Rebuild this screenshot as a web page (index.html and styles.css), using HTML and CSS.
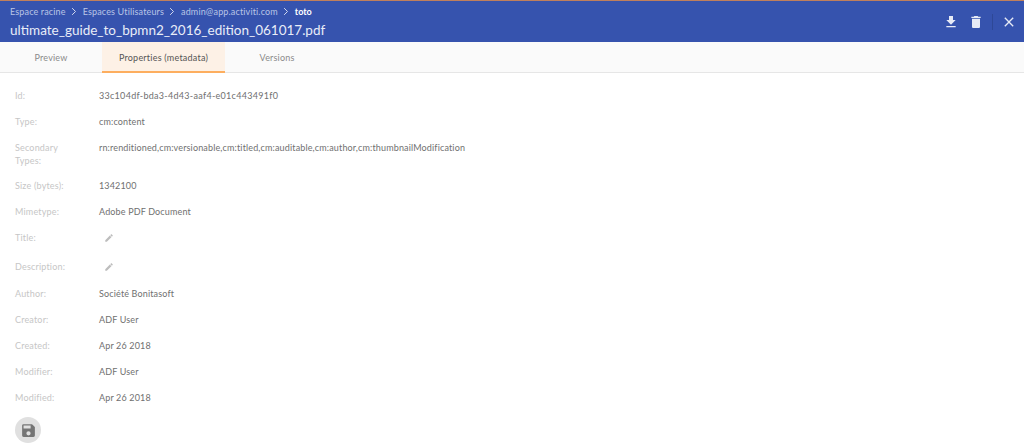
FILE: index.html
```html
<!DOCTYPE html>
<html lang="fr">
<head>
<meta charset="utf-8">
<title>Viewer</title>
<link rel="stylesheet" href="styles.css">
</head>
<body>
<header class="bar">
  <div class="bar-text">
    <nav class="crumbs">
      <span>Espace racine</span>
      <svg class="chev" viewBox="0 0 8 12"><path d="M1.5 1.5 6 6l-4.5 4.5" /></svg>
      <span>Espaces Utilisateurs</span>
      <svg class="chev" viewBox="0 0 8 12"><path d="M1.5 1.5 6 6l-4.5 4.5" /></svg>
      <span>admin@app.activiti.com</span>
      <svg class="chev" viewBox="0 0 8 12"><path d="M1.5 1.5 6 6l-4.5 4.5" /></svg>
      <span class="current">toto</span>
    </nav>
    <h1 class="file">ultimate_guide_to_bpmn2_2016_edition_061017.pdf</h1>
  </div>
  <div class="actions">
    <svg class="icon" viewBox="0 0 24 24"><path d="M19 9h-4V3H9v6H5l7 7 7-7zM5 18v2h14v-2H5z"/></svg>
    <svg class="icon trash" viewBox="0 0 24 24"><path d="M6 19c0 1.100.9 2 2 2h8c1.100 0 2-.9 2-2V7H6v12zM19 4h-3.500l-1-1h-5l-1 1H5v2h14V4z"/></svg>
    <span class="divider"></span>
    <svg class="icon close" viewBox="0 0 24 24"><path d="M19 6.410 17.590 5 12 10.590 6.410 5 5 6.410 10.590 12 5 17.590 6.410 19 12 13.410 17.590 19 19 17.590 13.410 12z"/></svg>
  </div>
</header>
<div class="tabs">
  <div class="tab">Preview</div>
  <div class="tab active">Properties (metadata)</div>
  <div class="tab">Versions</div>
</div>
<main class="props">
  <div class="row"><div class="key">Id:</div><div class="val wide">33c104df-bda3-4d43-aaf4-e01c443491f0</div></div>
  <div class="row"><div class="key">Type:</div><div class="val">cm:content</div></div>
  <div class="row"><div class="key">Secondary Types:</div><div class="val">rn:renditioned,cm:versionable,cm:titled,cm:auditable,cm:author,cm:thumbnailModification</div></div>
  <div class="row"><div class="key">Size (bytes):</div><div class="val">1342100</div></div>
  <div class="row"><div class="key">Mimetype:</div><div class="val">Adobe PDF Document</div></div>
  <div class="row edit"><div class="key">Title:</div><div class="val"><svg class="pen" viewBox="0 0 24 24"><path d="M3 17.250V21h3.750L17.810 9.940l-3.750-3.750L3 17.250zM20.710 7.040a1 1 0 0 0 0-1.410l-2.340-2.340a1 1 0 0 0-1.410 0l-1.830 1.830 3.750 3.750 1.830-1.830z"/></svg></div></div>
  <div class="row edit"><div class="key">Description:</div><div class="val"><svg class="pen" viewBox="0 0 24 24"><path d="M3 17.250V21h3.750L17.810 9.940l-3.750-3.750L3 17.250zM20.710 7.040a1 1 0 0 0 0-1.410l-2.340-2.340a1 1 0 0 0-1.410 0l-1.830 1.830 3.750 3.750 1.830-1.830z"/></svg></div></div>
  <div class="row"><div class="key">Author:</div><div class="val">Société Bonitasoft</div></div>
  <div class="row"><div class="key">Creator:</div><div class="val">ADF User</div></div>
  <div class="row"><div class="key">Created:</div><div class="val">Apr 26 2018</div></div>
  <div class="row"><div class="key">Modifier:</div><div class="val">ADF User</div></div>
  <div class="row"><div class="key">Modified:</div><div class="val">Apr 26 2018</div></div>
  <div class="save"><svg viewBox="0 0 24 24"><path d="M17 3H5a2 2 0 0 0-2 2v14a2 2 0 0 0 2 2h14a2 2 0 0 0 2-2V7l-4-4zm-5 16a3 3 0 1 1 0-6 3 3 0 0 1 0 6zm3-10H5V5h10v4z"/></svg></div>
</main>
</body>
</html>
```
FILE: styles.css
```css
* { box-sizing: border-box; }
html, body { margin: 0; padding: 0; height: 100%; overflow: hidden; background: #fff; }
body { font-family: "Lato", "Noto Sans", sans-serif; font-size: 9px; color: #666; }

.bar {
  height: 42px;
  background: #3653ae;
  border-top: 1px solid #c07f5c;
  display: flex;
  justify-content: space-between;
  align-items: flex-start;
  color: #fff;
}
.bar-text { padding: 4px 0 0 10px; }
.crumbs { display: flex; align-items: center; height: 13px; font-size: 9px; color: #b9c5e6; letter-spacing: .15px; }
.crumbs .current { color: #fff; font-weight: 700; letter-spacing: 0; }
.chev { width: 6px; height: 9px; margin: 0 6px 0 5px; fill: none; stroke: #d5dcf0; stroke-width: 1.300; }
.file { margin: 3px 0 0; font-size: 13.500px; line-height: 18px; font-weight: 400; color: #e9edf8; }

.actions { display: flex; align-items: center; height: 41px; padding-right: 7px; }
.icon { width: 16px; height: 16px; fill: #e6eaf6; }
.trash { margin-left: 9px; }
.divider { width: 1px; height: 16px; background: #2e4897; margin: 0 8px; }

.tabs { display: flex; height: 31px; background: #fafafa; border-bottom: 1px solid #e6e6e6; padding-left: 17px; }
.tab { height: 31px; line-height: 31px; text-align: center; font-size: 9px; letter-spacing: .18px; color: #8a8a8a; }
.tab:nth-child(1) { width: 68px; }
.tab:nth-child(2) { width: 123px; margin-left: 17px; letter-spacing: .22px; }
.tab:nth-child(3) { width: 104px; }
.tab.active { background: #fdf1e6; color: #555; border-bottom: 2px solid #fdae5f; }

.props { padding: 9px 0 0 15px; }
.row { display: flex; min-height: 26px; line-height: 13px; padding: 7px 0 5px; }
.row.edit { min-height: 28.500px; }
.row.edit + .row.edit { min-height: 27.500px; }
.key { width: 84px; padding-right: 20px; color: #c6c6c6; letter-spacing: .18px; }
.val { color: #707070; letter-spacing: .15px; white-space: nowrap; }
.val.wide { letter-spacing: .29px; }
.pen { display: block; width: 10px; height: 10px; margin: 2px 0 0 5px; fill: #bdbdbd; }

.save { width: 26px; height: 26px; margin-top: 7px; border-radius: 50%; background: #e0e0e0; display: flex; align-items: center; justify-content: center; }
.save svg { width: 17px; height: 17px; fill: #757575; }
```
